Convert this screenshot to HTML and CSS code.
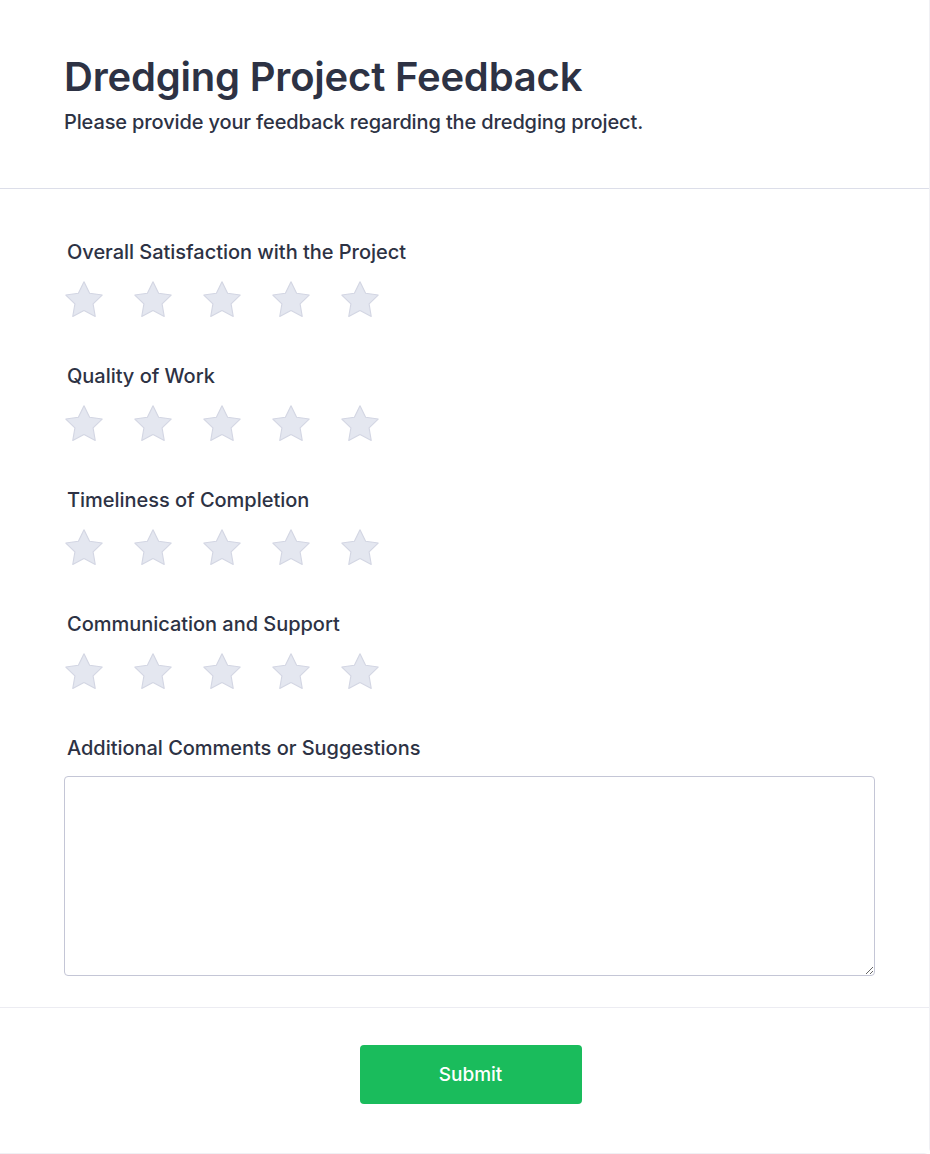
FILE: index.html
```html
<!DOCTYPE html>
<html lang="en">
<head>
<meta charset="utf-8">
<title>Dredging Project Feedback</title>
<link rel="stylesheet" href="styles.css">
</head>
<body>
<div class="card">
  <header class="card-header">
    <h1 class="title">Dredging Project Feedback</h1>
    <p class="subtitle">Please provide your feedback regarding the dredging project.</p>
  </header>
  <form class="card-body">
    <div class="field">
      <div class="label">Overall Satisfaction with the Project</div>
      <div class="stars">
        <svg class="star" viewBox="1 1 22 22"><path d="M12 2l3.09 6.26L22 9.27l-5 4.87 1.18 6.88L12 17.77l-6.18 3.25L7 14.14 2 9.27l6.91-1.01L12 2z"/></svg>
        <svg class="star" viewBox="1 1 22 22"><path d="M12 2l3.09 6.26L22 9.27l-5 4.87 1.18 6.88L12 17.77l-6.18 3.25L7 14.14 2 9.27l6.91-1.01L12 2z"/></svg>
        <svg class="star" viewBox="1 1 22 22"><path d="M12 2l3.09 6.26L22 9.27l-5 4.87 1.18 6.88L12 17.77l-6.18 3.25L7 14.14 2 9.27l6.91-1.01L12 2z"/></svg>
        <svg class="star" viewBox="1 1 22 22"><path d="M12 2l3.09 6.26L22 9.27l-5 4.87 1.18 6.88L12 17.77l-6.18 3.25L7 14.14 2 9.27l6.91-1.01L12 2z"/></svg>
        <svg class="star" viewBox="1 1 22 22"><path d="M12 2l3.09 6.26L22 9.27l-5 4.87 1.18 6.88L12 17.77l-6.18 3.25L7 14.14 2 9.27l6.91-1.01L12 2z"/></svg>
      </div>
    </div>
    <div class="field">
      <div class="label">Quality of Work</div>
      <div class="stars">
        <svg class="star" viewBox="1 1 22 22"><path d="M12 2l3.09 6.26L22 9.27l-5 4.87 1.18 6.88L12 17.77l-6.18 3.25L7 14.14 2 9.27l6.91-1.01L12 2z"/></svg>
        <svg class="star" viewBox="1 1 22 22"><path d="M12 2l3.09 6.26L22 9.27l-5 4.87 1.18 6.88L12 17.77l-6.18 3.25L7 14.14 2 9.27l6.91-1.01L12 2z"/></svg>
        <svg class="star" viewBox="1 1 22 22"><path d="M12 2l3.09 6.26L22 9.27l-5 4.87 1.18 6.88L12 17.77l-6.18 3.25L7 14.14 2 9.27l6.91-1.01L12 2z"/></svg>
        <svg class="star" viewBox="1 1 22 22"><path d="M12 2l3.09 6.26L22 9.27l-5 4.87 1.18 6.88L12 17.77l-6.18 3.25L7 14.14 2 9.27l6.91-1.01L12 2z"/></svg>
        <svg class="star" viewBox="1 1 22 22"><path d="M12 2l3.09 6.26L22 9.27l-5 4.87 1.18 6.88L12 17.77l-6.18 3.25L7 14.14 2 9.27l6.91-1.01L12 2z"/></svg>
      </div>
    </div>
    <div class="field">
      <div class="label">Timeliness of Completion</div>
      <div class="stars">
        <svg class="star" viewBox="1 1 22 22"><path d="M12 2l3.09 6.26L22 9.27l-5 4.87 1.18 6.88L12 17.77l-6.18 3.25L7 14.14 2 9.27l6.91-1.01L12 2z"/></svg>
        <svg class="star" viewBox="1 1 22 22"><path d="M12 2l3.09 6.26L22 9.27l-5 4.87 1.18 6.88L12 17.77l-6.18 3.25L7 14.14 2 9.27l6.91-1.01L12 2z"/></svg>
        <svg class="star" viewBox="1 1 22 22"><path d="M12 2l3.09 6.26L22 9.27l-5 4.87 1.18 6.88L12 17.77l-6.18 3.25L7 14.14 2 9.27l6.91-1.01L12 2z"/></svg>
        <svg class="star" viewBox="1 1 22 22"><path d="M12 2l3.09 6.26L22 9.27l-5 4.87 1.18 6.88L12 17.77l-6.18 3.25L7 14.14 2 9.27l6.91-1.01L12 2z"/></svg>
        <svg class="star" viewBox="1 1 22 22"><path d="M12 2l3.09 6.26L22 9.27l-5 4.87 1.18 6.88L12 17.77l-6.18 3.25L7 14.14 2 9.27l6.91-1.01L12 2z"/></svg>
      </div>
    </div>
    <div class="field">
      <div class="label">Communication and Support</div>
      <div class="stars">
        <svg class="star" viewBox="1 1 22 22"><path d="M12 2l3.09 6.26L22 9.27l-5 4.87 1.18 6.88L12 17.77l-6.18 3.25L7 14.14 2 9.27l6.91-1.01L12 2z"/></svg>
        <svg class="star" viewBox="1 1 22 22"><path d="M12 2l3.09 6.26L22 9.27l-5 4.87 1.18 6.88L12 17.77l-6.18 3.25L7 14.14 2 9.27l6.91-1.01L12 2z"/></svg>
        <svg class="star" viewBox="1 1 22 22"><path d="M12 2l3.09 6.26L22 9.27l-5 4.87 1.18 6.88L12 17.77l-6.18 3.25L7 14.14 2 9.27l6.91-1.01L12 2z"/></svg>
        <svg class="star" viewBox="1 1 22 22"><path d="M12 2l3.09 6.26L22 9.27l-5 4.87 1.18 6.88L12 17.77l-6.18 3.25L7 14.14 2 9.27l6.91-1.01L12 2z"/></svg>
        <svg class="star" viewBox="1 1 22 22"><path d="M12 2l3.09 6.26L22 9.27l-5 4.87 1.18 6.88L12 17.77l-6.18 3.25L7 14.14 2 9.27l6.91-1.01L12 2z"/></svg>
      </div>
    </div>
    <div class="field field-comments">
      <label class="label" for="comments">Additional Comments or Suggestions</label>
      <textarea id="comments" class="comments"></textarea>
    </div>
  </form>
  <footer class="card-footer">
    <button type="button" class="submit">Submit</button>
  </footer>
</div>
</body>
</html>
```

FILE: styles.css
```css
html, body {
  margin: 0;
  padding: 0;
  background: #ffffff;
}

body {
  font-family: Inter, "Noto Sans", sans-serif;
  color: #2d3244;
}

.card {
  width: 930px;
  height: 1154px;
  box-sizing: border-box;
  border-right: 1px solid #f0f0f4;
  border-bottom: 1px solid #f0f0f4;
  border-radius: 0 0 6px 0;
  display: flex;
  flex-direction: column;
}

.card-header {
  height: 189px;
  box-sizing: border-box;
  padding: 53px 64px 0;
  border-bottom: 1px solid #dcdee9;
}

.title {
  margin: 0;
  font-size: 40px;
  line-height: 48px;
  font-weight: 600;
  color: #2d3244;
  letter-spacing: -0.2px;
}

.subtitle {
  margin: 9px 0 0;
  font-size: 20px;
  line-height: 24px;
  font-weight: 500;
  color: #2d3244;
  letter-spacing: -0.13px;
}

.card-body {
  padding: 51px 55px 0 64px;
  display: flex;
  flex-direction: column;
  height: 819px;
  box-sizing: border-box;
  border-bottom: 1px solid #ececf2;
}

.field {
  display: flex;
  flex-direction: column;
  margin-bottom: 44px;
}

.label {
  display: block;
  padding-left: 3px;
  font-size: 20px;
  line-height: 24px;
  font-weight: 500;
  color: #2d3244;
  letter-spacing: -0.03px;
}

.stars {
  display: flex;
  gap: 29px;
  margin-top: 16px;
}

.star {
  width: 40px;
  height: 40px;
  display: block;
}

.star path {
  fill: #e4e7f0;
  stroke: #d3d6e3;
  stroke-width: 0.6;
  stroke-linejoin: round;
}

.field-comments {
  margin-bottom: 0;
}

.comments {
  margin-top: 16px;
  width: 811px;
  height: 200px;
  box-sizing: border-box;
  border: 1px solid #c4c6d6;
  border-radius: 4px;
  font-family: inherit;
  font-size: 16px;
  padding: 8px 10px;
  resize: vertical;
  outline: none;
}

.card-footer {
  flex: 1;
  display: flex;
  justify-content: center;
  padding-top: 37px;
  padding-left: 12px;
  background: #ffffff;
}

.submit {
  width: 222px;
  height: 59px;
  border: none;
  border-radius: 4px;
  background: #1abc5c;
  color: #ffffff;
  font-family: inherit;
  font-size: 19px;
  font-weight: 500;
  cursor: pointer;
}
```
